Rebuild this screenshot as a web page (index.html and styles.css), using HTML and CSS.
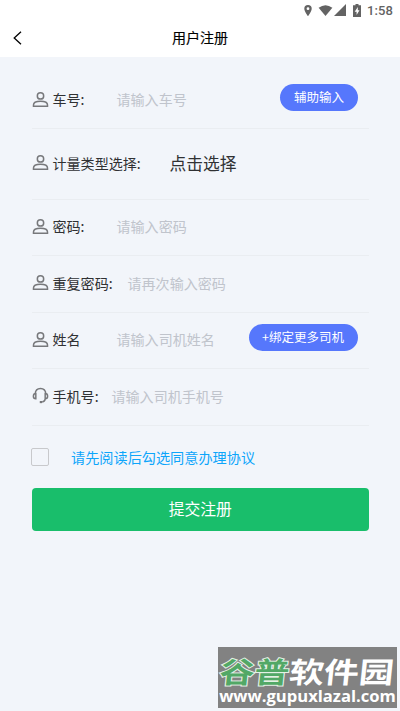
FILE: index.html
```html
<!DOCTYPE html>
<html lang="zh-CN">
<head>
<meta charset="utf-8">
<title>用户注册</title>
<link rel="stylesheet" href="styles.css">
</head>
<body>
<svg class="defs" width="0" height="0">
  <symbol id="user" viewBox="0 0 16 16">
    <circle cx="8" cy="4.600" r="3"/>
    <path d="M1.400 14.300v-1.200c0-2.300 3.200-3.500 6.600-3.500s6.600 1.200 6.600 3.500v1.200z"/>
  </symbol>
  <symbol id="headset" viewBox="0 0 16 16">
    <path d="M3 6.400C3.200 3.200 5.200 1.400 8 1.400s4.800 1.800 5 5M3.600 6.200v4.900C2.200 11.100 1.300 10.200 1.300 8.700s.9-2.500 2.300-2.500zM12.400 6.200v4.900c1.400 0 2.300-.9 2.300-2.400s-.9-2.500-2.300-2.500zM12.600 11c-.3 1.800-1.300 2.800-3 3.100"/>
    <path class="mic" d="M7.300 14.200h2.200"/>
  </symbol>
</svg>
<header class="top">
  <div class="status">
    <svg class="pin" viewBox="0 0 10 14"><path fill-rule="evenodd" d="M5 1a4 4 0 0 0-4 4c0 3 4 8 4 8s4-5 4-8a4 4 0 0 0-4-4zm0 2.500a1.500 1.500 0 1 1 0 3 1.500 1.500 0 0 1 0-3z"/></svg>
    <svg class="wifi" viewBox="0 0 15 12"><path d="M0 3Q7.500-2.500 15 3L7.500 12z"/></svg>
    <svg class="signal" viewBox="0 0 12 12"><path d="M12 0v12H0z"/></svg>
    <svg class="battery" viewBox="0 0 8 13"><path fill-rule="evenodd" d="M2.500 0h3v1.300H8V13H0V1.300h2.500zM4.800 3 1.700 7.700h1.900V11l2.900-4.700H4.800z"/></svg>
    <span class="time">1:58</span>
  </div>
  <div class="nav">
    <svg class="back" viewBox="0 0 9 14"><path d="M8 .7 1.200 7 8 13.300"/></svg>
    <h1>用户注册</h1>
  </div>
</header>
<main>
  <div class="row">
    <svg class="icon"><use href="#user"/></svg><span class="label">车号:</span><span class="hint">请输入车号</span><button class="pill">辅助输入</button>
  </div>
  <div class="row tall">
    <svg class="icon"><use href="#user"/></svg><span class="label">计量类型选择:</span><span class="choice">点击选择</span>
  </div>
  <div class="row">
    <svg class="icon"><use href="#user"/></svg><span class="label">密码:</span><span class="hint">请输入密码</span>
  </div>
  <div class="row">
    <svg class="icon"><use href="#user"/></svg><span class="label wide">重复密码:</span><span class="hint">请再次输入密码</span>
  </div>
  <div class="row">
    <svg class="icon"><use href="#user"/></svg><span class="label">姓名</span><span class="hint">请输入司机姓名</span><button class="pill">+绑定更多司机</button>
  </div>
  <div class="row">
    <svg class="icon"><use href="#headset"/></svg><span class="label phone">手机号:</span><span class="hint">请输入司机手机号</span>
  </div>
  <div class="agree"><span class="box"></span><span>请先阅读后勾选同意办理协议</span></div>
  <button class="submit">提交注册</button>
</main>
<aside class="mark">
  <div class="brand"><span class="green">谷普</span><span>软件园</span></div>
  <div class="url">www.gupuxlazal.com</div>
</aside>
</body>
</html>
```
FILE: styles.css
```css
* { box-sizing: border-box; }
body {
  margin: 0;
  height: 711px;
  overflow: hidden;
  background: #f2f5fa;
  color: #303133;
  font-family: "Noto Sans CJK SC", sans-serif;
  font-size: 14.060px;
}
button { border: 0; padding: 0; color: #fff; font-family: inherit; }
svg { display: block; flex: none; }
.defs { position: absolute; }
.top { height: 57px; background: #fff; }
.status {
  height: 20px;
  padding-right: 7px;
  display: flex;
  align-items: center;
  justify-content: flex-end;
  fill: #636363;
  color: #636363;
}
.pin { width: 10px; height: 13px; margin-right: 5px; }
.wifi { width: 15px; height: 11px; margin-right: 1px; }
.signal { width: 12px; height: 12px; margin-right: 7px; }
.battery { width: 8px; height: 13px; margin-right: 6px; }
.time { font: 500 13px/18px Roboto, sans-serif; letter-spacing: .1px; padding-top: 1px; }
.nav {
  height: 34px;
  padding-left: 13px;
  display: grid;
  grid-template-columns: 9px 1fr 22px;
  align-items: center;
}
.back { width: 9px; height: 14px; fill: none; stroke: #000; stroke-width: 1.300; position: relative; top: 1px; }
h1 { margin: 0; font-size: 14.060px; line-height: 20px; font-weight: 400; color: #000; text-align: center; -webkit-text-stroke: .15px #000; }
main { padding: 15.500px 31px 0 31.500px; }
.row {
  height: 56.500px;
  padding-bottom: 2px;
  display: flex;
  align-items: center;
  border-bottom: 1px solid #eaedf1;
}
.row.tall { height: 70.500px; padding-bottom: 2.500px; }
.icon { width: 17px; height: 17px; margin-right: 4px; fill: none; stroke: #77787b; stroke-width: 1.400; }
.mic { stroke-width: 2; }
.label { width: 64px; white-space: nowrap; }
.label.wide { width: 75px; }
.label.phone { width: 59px; }
.tall .label { width: 117px; }
.hint { color: #c0c4cc; white-space: nowrap; }
.choice { font-size: 16.800px; }
.pill {
  height: 27px;
  margin: -4px 11.500px 0 auto;
  padding: 0 13.500px;
  border-radius: 14px;
  background: #5677fc;
  font-size: 12.500px;
  line-height: 26px;
}
.agree { height: 62px; display: flex; align-items: center; color: #0da5fa; font-size: 14.160px; }
.box { width: 18px; height: 18px; margin: 0 22px 0 -.5px; border: 1px solid #c8c9cc; border-radius: 2px; }
.submit {
  display: block;
  width: 100%;
  height: 43px;
  border-radius: 4px;
  background: #19be6b;
  font-size: 15.800px;
  line-height: 42px;
}
.mark {
  position: absolute;
  left: 218px;
  top: 647px;
  width: 179px;
  height: 61px;
  padding-top: 7px;
  background: #828282;
  color: #fff;
  white-space: nowrap;
}
.brand {
  width: 146px;
  height: 33px;
  font-size: 29px;
  line-height: 33px;
  font-weight: 700;
  transform: translateX(2px) scaleX(1.200) skewX(-5deg);
  transform-origin: left;
}
.green { color: #52a866; -webkit-text-stroke: 2px #e4f1e6; paint-order: stroke; }
.url { width: 179px; height: 19px; font: 700 16.600px/18px "Open Sans", sans-serif; text-align: center; }
```
